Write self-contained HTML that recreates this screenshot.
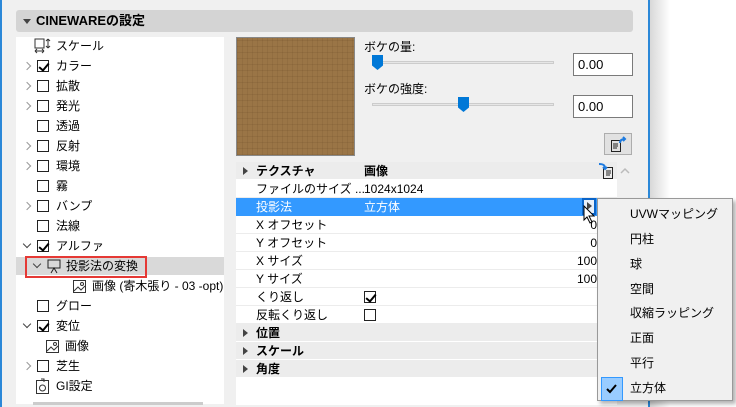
<!DOCTYPE html>
<html><head><meta charset="utf-8"><style>
*{margin:0;padding:0;box-sizing:border-box}
body{width:736px;height:407px;overflow:hidden;background:#f0f0f0;position:relative;font-family:"Liberation Sans","Noto Sans CJK JP",sans-serif;font-size:12px;color:#000}
.a{position:absolute}
.hdr{left:16px;top:10px;width:617px;height:22px;background:#d4d4d4;border-radius:3px;font-weight:bold;font-size:13px;line-height:22px;padding-left:20px}
.tri{width:0;height:0;border-left:4px solid transparent;border-right:4px solid transparent;border-top:5px solid #444}
.lp{left:16px;top:37px;width:208px;height:367px;background:#fff}
.row{position:absolute;left:0;height:20px;line-height:20px;width:208px}
.cb{position:absolute;left:21px;top:4px;width:12px;height:12px;border:1px solid #222;background:#fff}
.cb.on::after{content:"";position:absolute;left:3px;top:0px;width:4px;height:8px;border:solid #000;border-width:0 2px 2px 0;transform:rotate(40deg)}
.chev{position:absolute;left:8px;top:7px;width:6px;height:6px;border:solid #999;border-width:1.5px 1.5px 0 0;transform:rotate(45deg)}
.chev.d{transform:rotate(135deg);top:5px;border-color:#444}
.tx{position:absolute;left:40px}
.tbl{left:236px;top:162px;width:381px;height:243px;background:#fff}
.tr{position:absolute;left:0;width:381px;height:18px;line-height:18px;border-bottom:1px solid #ececec}
.tr.g{background:#ececec;font-weight:bold;border-bottom:1px solid #fff}
.tr .k{position:absolute;left:20px}
.tr .v{position:absolute;left:128px}
.tr .r{position:absolute;right:20px}
.rt{position:absolute;left:7px;top:5px;width:0;height:0;border-top:4px solid transparent;border-bottom:4px solid transparent;border-left:5px solid #444}
.menu{left:597px;top:198px;width:136px;height:203px;background:#f0f0f0;border:1px solid #999;box-shadow:3px 3px 4px rgba(0,0,0,.3)}
.mi{position:absolute;left:32px;height:25px;line-height:25px}
.inp{position:absolute;width:60px;height:23px;border:1px solid #7a7a7a;background:#fff;font-size:13px;line-height:21px;padding-left:4px}
.track{position:absolute;height:3px;background:#e6e6e6;border:1px solid #ccc}
.thumb{position:absolute;width:11px;height:15px;background:#0078d7;clip-path:polygon(0 0,100% 0,100% 70%,50% 100%,0 70%)}
</style></head><body>
<div class="a" style="left:0;top:0;width:2px;height:407px;background:#2b88d8"></div>
<div class="a" style="left:648px;top:0;width:2px;height:407px;background:#2b88d8"></div>
<div class="a" style="left:650px;top:0;width:86px;height:407px;background:linear-gradient(90deg,#d8d8d8,#fff 20px)"></div>

<div class="a hdr">CINEWAREの設定</div>
<div class="a tri" style="left:23px;top:19px"></div>

<div class="a lp">
<div class="row" style="top:-1px"><svg class="a" style="left:18px;top:2px" width="18" height="16"><rect x="1" y="1" width="9" height="9" fill="none" stroke="#333"/><path d="M1 13h9M1 13l2-2M1 13l2 2M10 13l-2-2M10 13l-2 2M14 1v9M14 1l-2 2M14 1l2 2M14 10l-2-2M14 10l2-2" stroke="#333" fill="none"/></svg><span class="tx">スケール</span></div>
<div class="row" style="top:19px"><i class="chev"></i><i class="cb on"></i><span class="tx">カラー</span></div>
<div class="row" style="top:39px"><i class="chev"></i><i class="cb"></i><span class="tx">拡散</span></div>
<div class="row" style="top:59px"><i class="chev"></i><i class="cb"></i><span class="tx">発光</span></div>
<div class="row" style="top:79px"><i class="cb"></i><span class="tx">透過</span></div>
<div class="row" style="top:99px"><i class="chev"></i><i class="cb"></i><span class="tx">反射</span></div>
<div class="row" style="top:119px"><i class="chev"></i><i class="cb"></i><span class="tx">環境</span></div>
<div class="row" style="top:139px"><i class="cb"></i><span class="tx">霧</span></div>
<div class="row" style="top:159px"><i class="chev"></i><i class="cb"></i><span class="tx">バンプ</span></div>
<div class="row" style="top:179px"><i class="cb"></i><span class="tx">法線</span></div>
<div class="row" style="top:199px"><i class="chev d"></i><i class="cb on"></i><span class="tx">アルファ</span></div>
<div class="row" style="top:220px;height:18px;background:#d9d9d9"></div>
<div class="a" style="left:9px;top:219px;width:122px;height:22px;border:2px solid #e53935"></div>
<div class="row" style="top:219px"><i class="chev d" style="left:18px"></i><svg class="a" style="left:31px;top:3px" width="14" height="15"><rect x="1" y="1" width="12" height="8" fill="none" stroke="#222"/><path d="M4 14l3-5 3 5" stroke="#222" fill="none"/></svg><span class="tx" style="left:50px">投影法の変換</span></div>
<div class="row" style="top:239px"><svg class="a" style="left:57px;top:4px" width="13" height="13"><rect x=".5" y=".5" width="12" height="12" fill="none" stroke="#333"/><path d="M1 11l4-4 3 3 4-4" stroke="#333" fill="none"/><circle cx="9" cy="4" r="1.5" fill="none" stroke="#333"/></svg><span class="tx" style="left:76px">画像 (寄木張り - 03 -opt)</span></div>
<div class="row" style="top:259px"><i class="cb"></i><span class="tx">グロー</span></div>
<div class="row" style="top:279px"><i class="chev d"></i><i class="cb on"></i><span class="tx">変位</span></div>
<div class="row" style="top:299px"><svg class="a" style="left:30px;top:4px" width="13" height="13"><rect x=".5" y=".5" width="12" height="12" fill="none" stroke="#333"/><path d="M1 11l4-4 3 3 4-4" stroke="#333" fill="none"/><circle cx="9" cy="4" r="1.5" fill="none" stroke="#333"/></svg><span class="tx" style="left:49px">画像</span></div>
<div class="row" style="top:319px"><i class="chev"></i><i class="cb"></i><span class="tx">芝生</span></div>
<div class="row" style="top:339px"><svg class="a" style="left:20px;top:2px" width="13" height="16"><rect x=".5" y="2.5" width="12" height="13" fill="none" stroke="#333"/><circle cx="6.5" cy="10" r="3" fill="none" stroke="#333"/><path d="M5 1h3v3" stroke="#333" fill="none"/></svg><span class="tx">GI設定</span></div>
<div class="a" style="left:17px;top:365px;width:170px;height:3px;background:#ccc"></div>
</div>

<div class="a" style="left:236px;top:37px;width:119px;height:119px;border:1px solid #888;background:
repeating-linear-gradient(0deg,rgba(80,50,20,.12) 0 1px,transparent 1px 6px),
repeating-linear-gradient(90deg,rgba(80,50,20,.1) 0 1px,transparent 1px 5px),#9a7546"></div>

<div class="a" style="left:364px;top:38px">ボケの量:</div>
<div class="track" style="left:372px;top:61px;width:182px"></div>
<div class="thumb" style="left:372px;top:55px"></div>
<div class="inp" style="left:573px;top:53px">0.00</div>
<div class="a" style="left:364px;top:80px">ボケの強度:</div>
<div class="track" style="left:372px;top:103px;width:182px"></div>
<div class="thumb" style="left:458px;top:97px"></div>
<div class="inp" style="left:573px;top:95px">0.00</div>
<div class="a" style="left:604px;top:133px;width:28px;height:22px;background:#e1e1e1;border:1px solid #adadad"></div>
<svg class="a" style="left:610px;top:136px" width="18" height="17"><rect x="1.5" y="4.5" width="9" height="11" fill="none" stroke="#222"/><path d="M3 8h5M3 10h5M3 12h4" stroke="#222"/><path d="M10 7c0-3 2-4 5-4M13 1l2 2-2 2" stroke="#1e7be0" stroke-width="2" fill="none"/></svg>

<div class="a tbl">
<div class="tr g" style="top:0"><i class="rt"></i><span class="k">テクスチャ</span><span class="v">画像</span></div>
<div class="tr" style="top:18px"><span class="k">ファイルのサイズ ...</span><span class="v">1024x1024</span></div>
<div class="tr" style="top:36px;background:#3399ff;color:#fff;border-color:#3399ff"><span class="k">投影法</span><span class="v">立方体</span></div>
<div class="tr" style="top:54px"><span class="k">X オフセット</span><span class="r">0</span></div>
<div class="tr" style="top:72px"><span class="k">Y オフセット</span><span class="r">0</span></div>
<div class="tr" style="top:90px"><span class="k">X サイズ</span><span class="r">100</span></div>
<div class="tr" style="top:108px"><span class="k">Y サイズ</span><span class="r">100</span></div>
<div class="tr" style="top:126px"><span class="k">くり返し</span><i class="cb on" style="left:128px;top:3px"></i></div>
<div class="tr" style="top:144px"><span class="k">反転くり返し</span><i class="cb" style="left:128px;top:3px"></i></div>
<div class="tr g" style="top:162px"><i class="rt"></i><span class="k">位置</span></div>
<div class="tr g" style="top:180px"><i class="rt"></i><span class="k">スケール</span></div>
<div class="tr g" style="top:198px"><i class="rt"></i><span class="k">角度</span></div>
</div>
<svg class="a" style="left:598px;top:162px" width="16" height="17"><rect x="5.5" y="5.5" width="9" height="11" fill="none" stroke="#222"/><path d="M8 9h5M8 11h5M8 13h4" stroke="#222"/><path d="M1 2c4 0 6 1 6 4M5 5l2 2 2-2" stroke="#1e7be0" stroke-width="2" fill="none"/></svg>
<svg class="a" style="left:620px;top:167px" width="10" height="7"><path d="M1 6l4-4 4 4" stroke="#bbb" stroke-width="1.5" fill="none"/></svg>
<div class="a" style="left:582px;top:198px;width:14px;height:17px;border:2px solid #0a64c8;background:#e8f0fa"></div>
<div class="a" style="left:587px;top:202px;width:0;height:0;border-top:4px solid transparent;border-bottom:4px solid transparent;border-left:5px solid #444"></div>
<svg class="a" style="left:583px;top:205px" width="14" height="20"><path d="M1 1v14l3-3 3 6 2-1-3-6h5z" fill="#fff" stroke="#000"/></svg>

<div class="a menu">
<div class="a" style="left:3px;top:178px;width:22px;height:24px;background:#99ccff;border:1px solid #3399ff"></div>
<svg class="a" style="left:8px;top:185px" width="12" height="10"><path d="M1 5l3 3 6-7" stroke="#000" stroke-width="2" fill="none"/></svg>
<div class="mi" style="top:3px">UVWマッピング</div>
<div class="mi" style="top:28px">円柱</div>
<div class="mi" style="top:53px">球</div>
<div class="mi" style="top:78px">空間</div>
<div class="mi" style="top:102px">収縮ラッピング</div>
<div class="mi" style="top:127px">正面</div>
<div class="mi" style="top:152px">平行</div>
<div class="mi" style="top:177px">立方体</div>
</div>
</body></html>
